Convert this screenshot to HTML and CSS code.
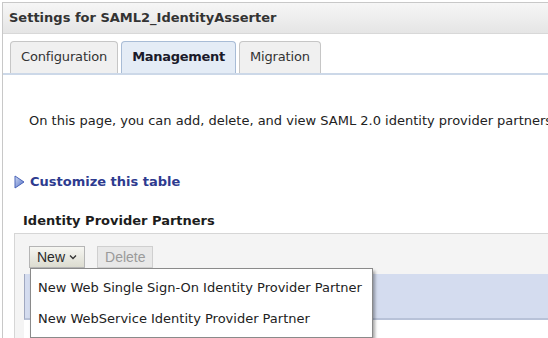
FILE: index.html
```html
<!DOCTYPE html>
<html>
<head>
<meta charset="utf-8">
<link rel="stylesheet" href="styles.css">
</head>
<body>
<div class="panel">
  <div class="header">Settings for SAML2_IdentityAsserter</div>
  <div class="tabs">
    <div class="tab">Configuration</div>
    <div class="tab active">Management</div>
    <div class="tab">Migration</div>
  </div>
  <div class="content">
    <p class="intro">On this page, you can add, delete, and view SAML 2.0 identity provider partners</p>
    <div class="customize">
      <svg class="arrow" width="11" height="14" viewBox="0 0 11 14"><defs><linearGradient id="g" x1="0" y1="0" x2="1" y2="1"><stop offset="0" stop-color="#d3ddf4"/><stop offset="1" stop-color="#4d6bc4"/></linearGradient></defs><path d="M1 1 L10 7 L1 13 Z" fill="url(#g)" stroke="#4a64b8" stroke-width="1" stroke-linejoin="round"/></svg>
      <span>Customize this table</span>
    </div>
    <div class="section-title">Identity Provider Partners</div>
    <div class="table-box">
      <div class="toolbar">
        <div class="new-wrap">
          <button class="btn">New <svg width="8" height="6" viewBox="0 0 8 6"><path d="M1 1.5 L4 4.5 L7 1.5" fill="none" stroke="#333" stroke-width="1.3"/></svg></button>
          <div class="menu">
            <div class="menu-item">New Web Single Sign-On Identity Provider Partner</div>
            <div class="menu-item">New WebService Identity Provider Partner</div>
          </div>
        </div>
        <button class="btn disabled">Delete</button>
      </div>
      <div class="grid">
        <div class="grid-head"></div>
        <div class="grid-row"></div>
      </div>
    </div>
  </div>
</div>
</body>
</html>
```
FILE: styles.css
```css
html, body {
  margin: 0;
  padding: 0;
  background: #fff;
  overflow: hidden;
}
body {
  font-family: "DejaVu Sans", Tahoma, sans-serif;
  color: #222;
  width: 548px;
  height: 338px;
}
.panel {
  margin: 2px 0 0 2px;
  border-left: 1px solid #c8c8c8;
  border-top: 1px solid #c8c8c8;
  height: 340px;
}
.header {
  height: 30px;
  line-height: 30px;
  padding-left: 6px;
  font-weight: bold;
  font-size: 13px;
  color: #333;
  background: linear-gradient(#f6f6f6, #e5e5e5);
  border-bottom: 1px solid #d8d8d8;
}
.tabs {
  display: flex;
  gap: 3px;
  padding-left: 7px;
  margin-top: 7px;
  border-bottom: 2px solid #ccd8e8;
}
.tab {
  height: 31px;
  line-height: 30px;
  padding: 0 10px;
  font-size: 13px;
  color: #333;
  background: #f0f0f0;
  border: 1px solid #c6c6c6;
  border-bottom: none;
  border-radius: 4px 4px 0 0;
  letter-spacing: -0.15px;
}
.tab.active {
  background: #e4ecf6;
  border-color: #a8bcd6;
  font-weight: bold;
  color: #1a1a2a;
  padding: 0 10px;
  letter-spacing: -0.3px;
}
.content {
  padding-left: 11px;
}
.intro {
  margin: 38px 0 0 15px;
  font-size: 13px;
  white-space: nowrap;
  color: #222;
}
.customize {
  display: flex;
  align-items: center;
  gap: 5px;
  margin-top: 46px;
  color: #2e3b8f;
  font-weight: bold;
  font-size: 13px;
}
.customize .arrow {
  flex: none;
}
.section-title {
  margin: 24px 0 0 9px;
  font-weight: bold;
  font-size: 13px;
  color: #1d1d1d;
}
.table-box {
  margin-top: 5px;
  border-top: 1px solid #d6d6d6;
  border-left: 1px solid #d6d6d6;
  background: #f4f4f4;
  height: 120px;
}
.toolbar {
  display: flex;
  gap: 12px;
  padding: 12px 0 0 14px;
  height: 31px;
  box-sizing: border-box;
}
.new-wrap {
  position: relative;
}
.btn {
  font-family: "Liberation Sans", Arial, sans-serif;
  font-size: 14px;
  height: 22px;
  padding: 0 7px;
  border: 1px solid #b5b5b5;
  background: linear-gradient(#f6f6f2, #dcdcd0);
  color: #2a2a2a;
  display: flex;
  align-items: center;
  gap: 4px;
}
.btn.disabled {
  color: #9a9a9a;
  background: #e8e8e8;
  border-color: #cfcfcf;
}
.grid {
  margin: 9px 0 0 9px;
}
.grid-head {
  height: 44px;
  background: #d4dcef;
  border-left: 1px solid #a0a8c0;
  border-bottom: 2px solid #b8c2d8;
}
.grid-row {
  background: #fff;
  height: 20px;
}
.menu {
  position: absolute;
  left: 1px;
  top: 22px;
  width: 341px;
  background: #fff;
  border: 1px solid #8a8a8a;
  box-shadow: 2px 3px 3px rgba(0,0,0,0.35);
  padding: 4px 0 2px;
  z-index: 5;
}
.menu-item {
  font-size: 13px;
  padding-left: 7px;
  height: 31px;
  line-height: 29px;
  color: #222;
  white-space: nowrap;
}
```
